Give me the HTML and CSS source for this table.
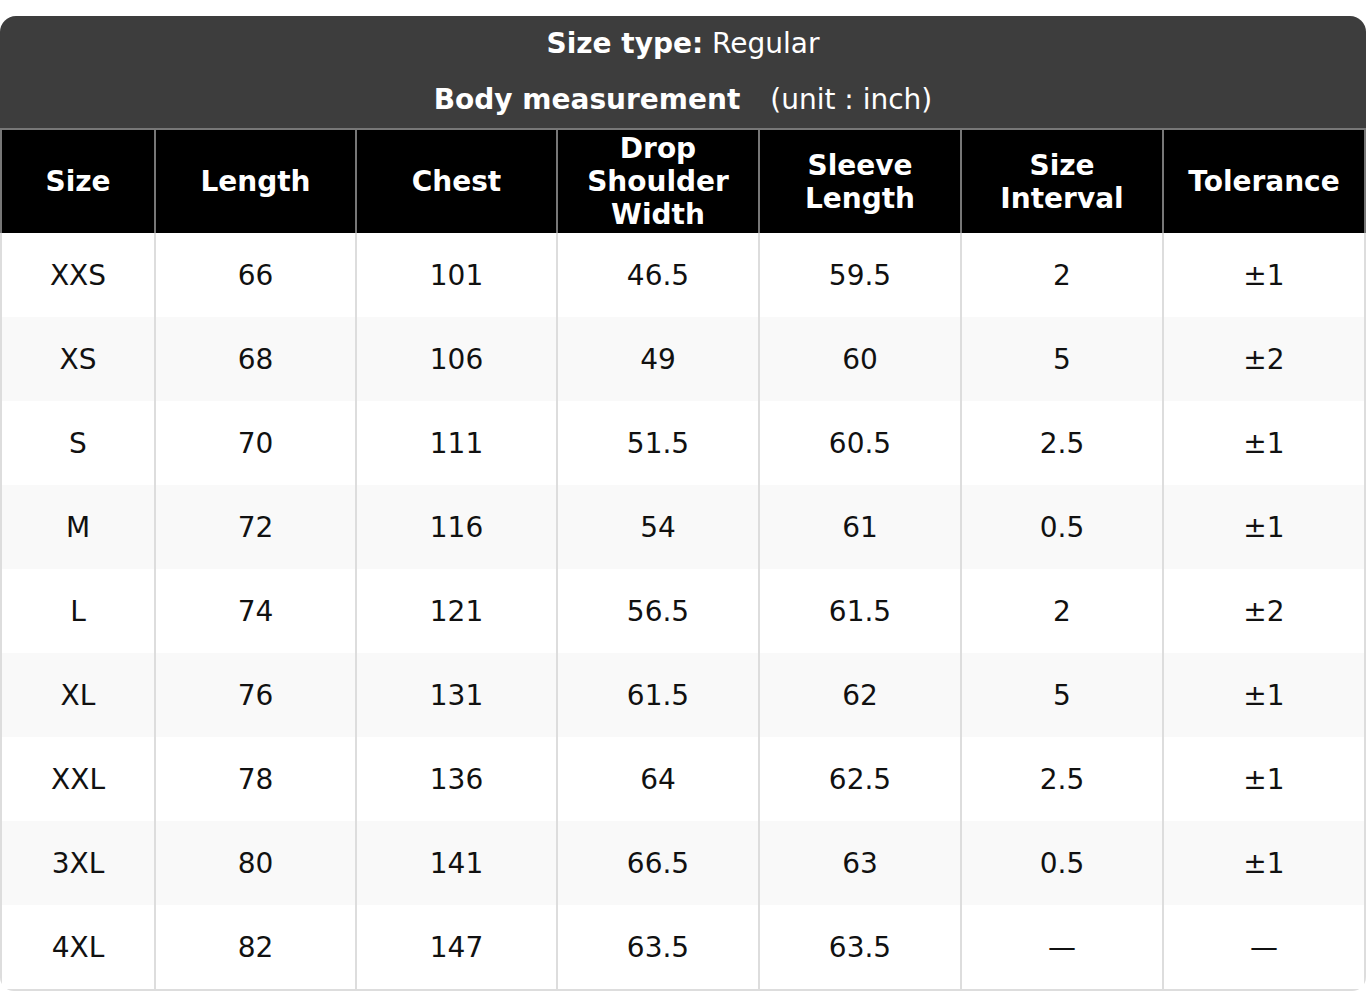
FILE: index.html
```html
<!DOCTYPE html>
<html>
<head>
<meta charset="utf-8">
<link rel="stylesheet" href="styles.css">
</head>
<body>
<div class="chart">
  <div class="title">
    <div class="title-line"><b>Size type:</b> Regular</div>
    <div class="title-line"><b>Body measurement</b><span class="unit">(unit : inch)</span></div>
  </div>
  <table class="grid">
    <colgroup>
      <col class="c-size"><col class="c-a"><col class="c-a"><col class="c-b"><col class="c-b"><col class="c-b"><col>
    </colgroup>
    <thead>
      <tr>
        <th>Size</th>
        <th>Length</th>
        <th>Chest</th>
        <th>Drop<br>Shoulder<br>Width</th>
        <th>Sleeve<br>Length</th>
        <th>Size<br>Interval</th>
        <th>Tolerance</th>
      </tr>
    </thead>
    <tbody>
      <tr><td>XXS</td><td>66</td><td>101</td><td>46.5</td><td>59.5</td><td>2</td><td>±1</td></tr>
      <tr><td>XS</td><td>68</td><td>106</td><td>49</td><td>60</td><td>5</td><td>±2</td></tr>
      <tr><td>S</td><td>70</td><td>111</td><td>51.5</td><td>60.5</td><td>2.5</td><td>±1</td></tr>
      <tr><td>M</td><td>72</td><td>116</td><td>54</td><td>61</td><td>0.5</td><td>±1</td></tr>
      <tr><td>L</td><td>74</td><td>121</td><td>56.5</td><td>61.5</td><td>2</td><td>±2</td></tr>
      <tr><td>XL</td><td>76</td><td>131</td><td>61.5</td><td>62</td><td>5</td><td>±1</td></tr>
      <tr><td>XXL</td><td>78</td><td>136</td><td>64</td><td>62.5</td><td>2.5</td><td>±1</td></tr>
      <tr><td>3XL</td><td>80</td><td>141</td><td>66.5</td><td>63</td><td>0.5</td><td>±1</td></tr>
      <tr><td>4XL</td><td>82</td><td>147</td><td>63.5</td><td>63.5</td><td>—</td><td>—</td></tr>
    </tbody>
  </table>
</div>
</body>
</html>
```
FILE: styles.css
```css
html, body {
  margin: 0;
  padding: 0;
  background: #fff;
}
body {
  padding-top: 16px;
  font-family: "DejaVu Sans", Verdana, sans-serif;
  font-size: 28px;
  color: #111;
}
.chart {
  border-radius: 16px 16px 14px 14px;
  overflow: hidden;
  background: #fff;
}
.title {
  background: #3d3d3d;
  color: #fff;
  text-align: center;
}
.title-line {
  height: 56px;
  line-height: 56px;
}
.unit {
  margin-left: 30px;
}
.grid {
  width: 100%;
  border-collapse: separate;
  border-spacing: 0;
  table-layout: fixed;
}
.c-size {
  width: 154px;
}
.c-a {
  width: 201px;
}
.c-b {
  width: 202px;
}
.grid th {
  background: #000;
  color: #fff;
  font-weight: bold;
  line-height: 33px;
  height: 103px;
  padding: 0;
  border-top: 2px solid #777;
  border-left: 2px solid #777;
  box-sizing: content-box;
  vertical-align: middle;
  text-align: center;
}
.grid th:last-child {
  border-right: 2px solid #777;
}
.grid td {
  height: 84px;
  padding: 0;
  text-align: center;
  vertical-align: middle;
  border-left: 2px solid #ddd;
  box-sizing: border-box;
}
.grid td:last-child {
  border-right: 2px solid #ddd;
}
.grid tbody tr:nth-child(even) td {
  background: #f9f9f9;
}
.grid tbody tr:last-child td {
  border-bottom: 2px solid #ddd;
  height: 86px;
}
```
